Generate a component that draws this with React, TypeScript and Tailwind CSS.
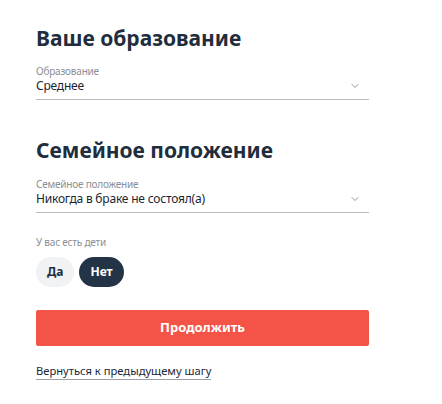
import { ChevronDown } from "lucide-react";

const Field = ({ label, value }: { label: string; value: string }) => (
  <div className="border-b border-[#b9bcc1] pb-[6px]">
    <div className="text-[10px] leading-[12px] text-[#8a8f96] tracking-[-0.2px]">{label}</div>
    <div className="mt-[1px] flex items-center justify-between text-[12px] leading-[15px] text-[#1b2633] tracking-[-0.2px]">
      <span>{value}</span>
      <ChevronDown className="w-3 h-3 mr-[8px] text-[#6b7280]" strokeWidth={1.5} />
    </div>
  </div>
);

const App = () => {
  return (
    <div className="min-h-screen bg-white font-['Noto_Sans',sans-serif]">
      <div className="w-[333px] ml-[36px] pt-[23px]">
        <h2 className="text-[21px] leading-[30px] font-bold text-[#1f2d3d]">Ваше образование</h2>
        <div className="mt-[12px]">
          <Field label="Образование" value="Среднее" />
        </div>

        <h2 className="mt-[35px] text-[21px] leading-[30px] font-bold text-[#1f2d3d]">Семейное положение</h2>
        <div className="mt-[13px]">
          <Field label="Семейное положение" value="Никогда в браке не состоял(а)" />
        </div>

        <div className="mt-[23px] text-[10px] leading-[12px] text-[#8a8f96] tracking-[-0.2px]">У вас есть дети</div>
        <div className="mt-[9px] flex gap-[5px]">
          <button className="h-[30px] px-[11px] rounded-full bg-[#f1f2f4] text-[12px] font-bold text-[#1f2d3d]">Да</button>
          <button className="h-[30px] px-[11px] rounded-full bg-[#243447] text-[12px] font-bold text-white">Нет</button>
        </div>

        <button className="mt-[23px] w-full h-[36px] rounded-[2px] bg-[#f45347] text-[13px] font-bold text-white">
          Продолжить
        </button>

        <div className="mt-[16px] leading-[14px]">
          <a href="#" className="text-[11.2px] leading-[14px] text-[#1b2633] border-b border-[#9aa0a6] pb-[1px]">
            Вернуться к предыдущему шагу
          </a>
        </div>
      </div>
    </div>
  );
};

export default App;
